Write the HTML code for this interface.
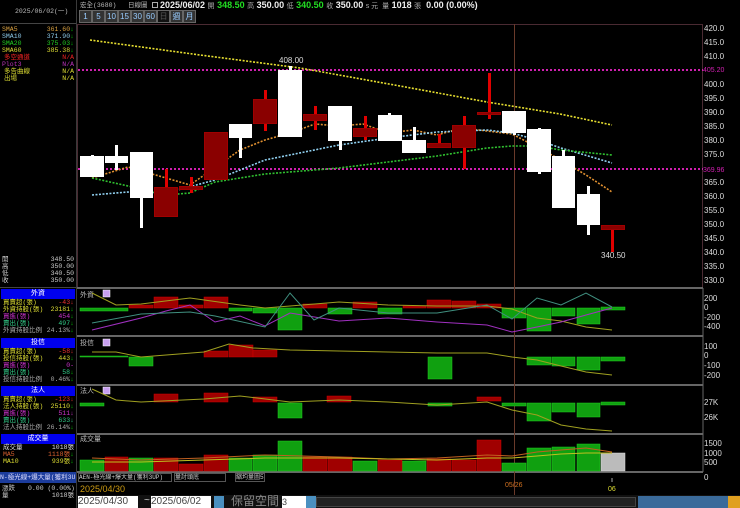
<!DOCTYPE html>
<html><head><meta charset="utf-8"><style>
*{margin:0;padding:0;box-sizing:border-box}
body{width:740px;height:508px;background:#000;overflow:hidden;position:relative;font-family:"Liberation Sans","Noto Sans CJK TC",sans-serif;font-size:8px;color:#ccc}
.a{position:absolute;white-space:nowrap;line-height:1}
.s{font-family:"Liberation Mono","Noto Sans CJK TC",monospace;font-size:6.5px}
.r{text-align:right}
.hdr{background:#0000ee;color:#fff;text-align:center;height:10px;line-height:10px;font-size:7px}
.btn{position:absolute;top:10px;height:13px;background:#333;border:1px solid #666;color:#9cf;font-size:8px;text-align:center;line-height:11px}
</style></head><body>
<div class="a s" style="left:15px;top:9px;color:#bbb">2025/06/02(一)</div>
<div class="a" style="left:0;top:23px;width:76px;height:1px;background:#444"></div>
<div class="a" style="left:76px;top:0;width:1px;height:508px;background:#3a3a3a"></div>
<div class="a s" style="left:2px;top:27px;color:#d9a040">SMA5</div><div class="a s r" style="left:40px;top:27px;width:34px;color:#d9a040">361.60<span style="color:#0c0">↓</span></div>
<div class="a s" style="left:2px;top:34px;color:#8cc8e8">SMA10</div><div class="a s r" style="left:40px;top:34px;width:34px;color:#8cc8e8">371.90<span style="color:#0c0">↓</span></div>
<div class="a s" style="left:2px;top:41px;color:#2c2">SMA20</div><div class="a s r" style="left:40px;top:41px;width:34px;color:#2c2">375.03<span style="color:#0c0">↓</span></div>
<div class="a s" style="left:2px;top:48px;color:#dd3">SMA60</div><div class="a s r" style="left:40px;top:48px;width:34px;color:#dd3">385.38<span style="color:#0c0">↓</span></div>
<div class="a s" style="left:4px;top:55px;color:#e22">多空通道</div><div class="a s r" style="left:40px;top:55px;width:34px;color:#e22">N/A</div>
<div class="a s" style="left:2px;top:62px;color:#b3b">Plot3</div><div class="a s r" style="left:40px;top:62px;width:34px;color:#b3b">N/A</div>
<div class="a s" style="left:4px;top:69px;color:#dd3">多告曲線</div><div class="a s r" style="left:40px;top:69px;width:34px;color:#dd3">N/A</div>
<div class="a s" style="left:4px;top:76px;color:#dd3">出場</div><div class="a s r" style="left:40px;top:76px;width:34px;color:#dd3">N/A</div>
<div class="a s" style="left:2px;top:257px">開</div><div class="a s r" style="left:40px;top:257px;width:34px">348.50</div>
<div class="a s" style="left:2px;top:264px">高</div><div class="a s r" style="left:40px;top:264px;width:34px">350.00</div>
<div class="a s" style="left:2px;top:271px">低</div><div class="a s r" style="left:40px;top:271px;width:34px">340.50</div>
<div class="a s" style="left:2px;top:278px">收</div><div class="a s r" style="left:40px;top:278px;width:34px">350.00</div>
<div class="a" style="left:0;top:287px;width:76px;height:1px;background:#444"></div>
<div class="a hdr" style="left:1px;top:289px;width:74px">外資</div>
<div class="a s" style="left:3px;top:300px;color:#dd3">買賣超(張)</div><div class="a s r" style="left:40px;top:300px;width:34px;color:#e33">-43↓</div>
<div class="a s" style="left:3px;top:307px;color:#dd3">外資持股(張)</div><div class="a s r" style="left:44px;top:307px;width:30px;color:#dd3">23181<span style="color:#0c0">↓</span></div>
<div class="a s" style="left:3px;top:314px;color:#c3c">買進(張)</div><div class="a s r" style="left:40px;top:314px;width:34px;color:#c3c">454<span style="color:#0c0">↓</span></div>
<div class="a s" style="left:3px;top:321px;color:#3c8">賣出(張)</div><div class="a s r" style="left:40px;top:321px;width:34px;color:#3c8">497<span style="color:#0c0">↓</span></div>
<div class="a s" style="left:3px;top:328px;color:#aaa">外資持股比例</div><div class="a s r" style="left:44px;top:328px;width:30px;color:#aaa">24.13%<span style="color:#0c0">↓</span></div>
<div class="a hdr" style="left:1px;top:338px;width:74px">投信</div>
<div class="a s" style="left:3px;top:349px;color:#dd3">買賣超(張)</div><div class="a s r" style="left:40px;top:349px;width:34px;color:#e33">-58↓</div>
<div class="a s" style="left:3px;top:356px;color:#dd3">投信持股(張)</div><div class="a s r" style="left:44px;top:356px;width:30px;color:#dd3">443<span style="color:#0c0">↓</span></div>
<div class="a s" style="left:3px;top:363px;color:#c3c">買進(張)</div><div class="a s r" style="left:40px;top:363px;width:34px;color:#c3c">0-</div>
<div class="a s" style="left:3px;top:370px;color:#3c8">賣出(張)</div><div class="a s r" style="left:40px;top:370px;width:34px;color:#3c8">58<span style="color:#0c0">↓</span></div>
<div class="a s" style="left:3px;top:377px;color:#aaa">投信持股比例</div><div class="a s r" style="left:44px;top:377px;width:30px;color:#aaa">0.46%<span style="color:#0c0">↓</span></div>
<div class="a hdr" style="left:1px;top:386px;width:74px">法人</div>
<div class="a s" style="left:3px;top:397px;color:#dd3">買賣超(張)</div><div class="a s r" style="left:40px;top:397px;width:34px;color:#e33">-123↓</div>
<div class="a s" style="left:3px;top:404px;color:#dd3">法人持股(張)</div><div class="a s r" style="left:44px;top:404px;width:30px;color:#dd3">25110<span style="color:#0c0">↓</span></div>
<div class="a s" style="left:3px;top:411px;color:#c3c">買進(張)</div><div class="a s r" style="left:40px;top:411px;width:34px;color:#c3c">511↓</div>
<div class="a s" style="left:3px;top:418px;color:#3c8">賣出(張)</div><div class="a s r" style="left:40px;top:418px;width:34px;color:#3c8">633↓</div>
<div class="a s" style="left:3px;top:425px;color:#aaa">法人持股比例</div><div class="a s r" style="left:44px;top:425px;width:30px;color:#aaa">26.14%<span style="color:#0c0">↓</span></div>
<div class="a hdr" style="left:1px;top:434px;width:74px">成交量</div>
<div class="a s" style="left:3px;top:445px;color:#ddd">成交量</div><div class="a s r" style="left:40px;top:445px;width:34px;color:#ddd">1018張</div>
<div class="a s" style="left:3px;top:452px;color:#d86030">MA5</div><div class="a s r" style="left:40px;top:452px;width:34px;color:#d86030">1118張<span style="color:#0c0">↓</span></div>
<div class="a s" style="left:3px;top:459px;color:#dd3">MA10</div><div class="a s r" style="left:40px;top:459px;width:34px;color:#dd3">939張<span style="color:#0c0">↓</span></div>
<div class="a s" style="left:0;top:472px;width:76px;height:11px;background:#1c3c9c;color:#ddf;line-height:11px;overflow:hidden">N-極光線+爆大量(獲利3U</div>
<div class="a s" style="left:2px;top:486px">漲跌</div><div class="a s r" style="left:28px;top:486px;width:46px">0.00 (0.00%)</div>
<div class="a s" style="left:2px;top:493px">量</div><div class="a s r" style="left:28px;top:493px;width:46px">1018張</div>

<div class="a s" style="left:80px;top:3px;color:#bbb">宏全(3680)</div>
<div class="a s" style="left:128px;top:3px;color:#bbb">日線圖</div>
<div class="a" style="left:152px;top:2px;width:6px;height:6px;border:1px solid #aaa"></div>
<div class="a" style="left:160px;top:1px;font-size:9px;font-weight:bold;color:#eee">2025/06/02 <span style="font-weight:normal;font-size:7px;color:#aaa">開</span> <span style="color:#2d2">348.50</span> <span style="font-weight:normal;font-size:7px;color:#aaa">高</span> 350.00 <span style="font-weight:normal;font-size:7px;color:#aaa">低</span> <span style="color:#2d2">340.50</span> <span style="font-weight:normal;font-size:7px;color:#aaa">收</span> 350.00 <span style="font-weight:normal;font-size:7px;color:#aaa">s 元 &nbsp;量</span> 1018 <span style="font-weight:normal;font-size:7px;color:#aaa">張</span> &nbsp;0.00 (0.00%)</div>
<div class="btn" style="left:79px;width:13px">1</div><div class="btn" style="left:92px;width:13px">5</div><div class="btn" style="left:105px;width:13px">10</div><div class="btn" style="left:118px;width:13px">15</div><div class="btn" style="left:131px;width:13px">30</div><div class="btn" style="left:144px;width:13px">60</div><div class="btn" style="left:157px;width:13px;background:#111;color:#555">日</div><div class="btn" style="left:170px;width:13px">週</div><div class="btn" style="left:183px;width:13px">月</div>

<svg class="a" style="left:0;top:0" width="740" height="508" viewBox="0 0 740 508" font-family="Liberation Sans, sans-serif" font-size="8">
<rect x="77.5" y="24.5" width="625" height="263" fill="none" stroke="#4a2a32"/>
<g stroke="#666" stroke-width="2"><line x1="77" y1="288" x2="703" y2="288"/><line x1="77" y1="336" x2="703" y2="336"/><line x1="77" y1="385" x2="703" y2="385"/><line x1="77" y1="434" x2="703" y2="434"/><line x1="77" y1="472" x2="703" y2="472"/></g>
<line x1="703" y1="288" x2="703" y2="472" stroke="#666"/>
<line x1="514.5" y1="24" x2="514.5" y2="495" stroke="#6a3a2a"/>
<g stroke="#d020b0" stroke-width="2" stroke-dasharray="2 2"><line x1="78" y1="70" x2="703" y2="70"/><line x1="78" y1="169" x2="703" y2="169"/></g>
<g fill="none" stroke-width="1.6" stroke-dasharray="2 1.5">
<polyline stroke="#e8e030" points="90,40 200,55 300,68 400,86 487,102 560,114 612,125"/>
<polyline stroke="#e09030" points="92,178 128,167 166,178 190,185 240,150 265,140 290,133 315,124 339,126 363,124 388,133 413,130 437,135 462,128 487,131 512,134 537,147 561,160 586,175 612,192"/>
<polyline stroke="#90d0f0" points="92,195 128,192 166,193 215,180 265,160 339,145 388,138 437,132 487,130 512,133 537,140 561,148 612,163"/>
<polyline stroke="#30c030" points="92,178 128,186 166,195 190,193 215,182 265,174 339,168 388,162 437,156 487,148 512,146 537,146 561,150 612,155"/>
</g>
<g fill="#fff">
<rect x="91" y="155" width="3" height="22"/><rect x="80" y="156" width="24" height="21"/>
<rect x="115" y="145" width="3" height="25"/><rect x="105" y="156" width="23" height="7"/>
<rect x="140" y="152" width="3" height="76"/><rect x="130" y="152" width="23" height="46"/>
<rect x="239" y="124" width="3" height="34"/><rect x="229" y="124" width="23" height="14"/>
<rect x="289" y="66" width="3" height="71"/><rect x="278" y="70" width="24" height="67"/>
<rect x="339" y="106" width="3" height="44"/><rect x="328" y="106" width="24" height="35"/>
<rect x="388" y="113" width="3" height="28"/><rect x="378" y="115" width="24" height="26"/>
<rect x="413" y="127" width="3" height="26"/><rect x="402" y="140" width="24" height="13"/>
<rect x="513" y="111" width="3" height="24"/><rect x="502" y="111" width="24" height="22"/>
<rect x="538" y="128" width="3" height="46"/><rect x="527" y="129" width="24" height="43"/>
<rect x="562" y="150" width="3" height="58"/><rect x="552" y="156" width="23" height="52"/>
<rect x="587" y="186" width="3" height="49"/><rect x="577" y="194" width="23" height="31"/>
</g>
<g fill="#e00000">
<rect x="165" y="169" width="3" height="21"/><rect x="190" y="177" width="3" height="16"/><rect x="264" y="90" width="3" height="41"/><rect x="314" y="106" width="3" height="24"/><rect x="364" y="116" width="3" height="24"/><rect x="438" y="134" width="3" height="14"/><rect x="463" y="116" width="3" height="53"/><rect x="488" y="73" width="3" height="46"/><rect x="611" y="229" width="3" height="23"/>
</g>
<g fill="#8a0000" stroke="#a00000">
<rect x="154.5" y="187.5" width="23" height="29"/><rect x="179.5" y="186.5" width="23" height="3"/><rect x="204.5" y="132.5" width="23" height="47"/><rect x="253.5" y="99.5" width="23" height="24"/><rect x="303.5" y="114.5" width="23" height="6"/><rect x="353.5" y="128.5" width="23" height="8"/><rect x="427.5" y="143.5" width="23" height="4"/><rect x="452.5" y="125.5" width="23" height="22"/><rect x="477.5" y="112.5" width="23" height="2"/><rect x="601.5" y="225.5" width="23" height="4"/>
</g>
<text x="279" y="63" fill="#ddd">408.00</text>
<text x="601" y="258" fill="#ddd">340.50</text>
<g fill="#ddd" font-size="8">
<text x="704" y="31">420.0</text><text x="704" y="45">415.0</text><text x="704" y="59">410.0</text><text x="704" y="87">400.0</text><text x="704" y="101">395.0</text><text x="704" y="115">390.0</text><text x="704" y="129">385.0</text><text x="704" y="143">380.0</text><text x="704" y="157">375.0</text><text x="704" y="185">365.0</text><text x="704" y="199">360.0</text><text x="704" y="213">355.0</text><text x="704" y="227">350.0</text><text x="704" y="241">345.0</text><text x="704" y="255">340.0</text><text x="704" y="269">335.0</text><text x="704" y="283">330.0</text>
<text x="704" y="301">200</text><text x="704" y="310">0</text><text x="704" y="320">-200</text><text x="704" y="329">-400</text>
<text x="704" y="349">100</text><text x="704" y="358">0</text><text x="704" y="368">-100</text><text x="704" y="378">-200</text>
<text x="704" y="405">27K</text><text x="704" y="420">26K</text>
<text x="704" y="446">1500</text><text x="704" y="456">1000</text><text x="704" y="465">500</text><text x="704" y="480">0</text>
</g>
<text x="703" y="72" fill="#d020b0" font-size="7">405.20</text><text x="703" y="172" fill="#d020b0" font-size="7">369.96</text>
<g fill="#bbb" font-size="7"><text x="80" y="297">外資</text><text x="80" y="345">投信</text><text x="80" y="393">法人</text><text x="80" y="441">成交量</text></g>
<g fill="#c8a0f0" stroke="#fff" stroke-width=".5"><rect x="103" y="290" width="7" height="7"/><rect x="103" y="339" width="7" height="7"/><rect x="103" y="387" width="7" height="7"/></g>
<g fill="#10a010" stroke="#20d020" stroke-width=".5">
<rect x="80" y="308" width="48" height="3"/><rect x="229" y="308" width="23" height="3"/><rect x="253" y="308" width="24" height="5"/><rect x="278" y="308" width="24" height="22"/><rect x="328" y="308" width="24" height="6"/><rect x="378" y="308" width="24" height="6"/><rect x="502" y="308" width="24" height="10"/><rect x="527" y="308" width="24" height="23"/><rect x="552" y="308" width="23" height="8"/><rect x="577" y="308" width="23" height="16"/><rect x="601" y="307" width="24" height="3"/>
</g>
<g fill="#a00000" stroke="#d00000" stroke-width=".5">
<rect x="129" y="305" width="24" height="3"/><rect x="154" y="297" width="24" height="11"/><rect x="179" y="305" width="24" height="3"/><rect x="204" y="297" width="24" height="11"/><rect x="303" y="304" width="24" height="4"/><rect x="353" y="302" width="24" height="6"/><rect x="427" y="300" width="24" height="8"/><rect x="452" y="301" width="24" height="7"/><rect x="477" y="304" width="24" height="4"/><rect x="403" y="306" width="23" height="2"/>
</g>
<g fill="none" stroke-width="1">
<polyline stroke="#a0a020" points="92,293 116,305 141,304 190,298 240,305 265,308 290,306 339,302 388,305 437,306 487,306 512,309 537,318 561,321 586,327 612,330"/>
<polyline stroke="#a030c0" points="92,330 141,318 166,311 190,305 215,322 240,316 265,326 290,313 339,321 388,318 437,322 487,325 512,332 537,327 561,322 586,315 612,308"/>
<polyline stroke="#409080" points="92,323 141,314 190,312 215,316 265,327 290,293 314,320 339,308 388,313 437,313 487,305 512,319 537,298 561,305 586,293 612,307"/>
</g>
<g fill="#10a010" stroke="#20d020" stroke-width=".5">
<rect x="129" y="357" width="24" height="9"/><rect x="428" y="357" width="24" height="22"/><rect x="527" y="357" width="24" height="8"/><rect x="552" y="357" width="23" height="9"/><rect x="577" y="357" width="23" height="13"/><rect x="601" y="357" width="24" height="4"/><rect x="80" y="356" width="48" height="1"/>
</g>
<g fill="#a00000" stroke="#d00000" stroke-width=".5">
<rect x="204" y="351" width="24" height="6"/><rect x="229" y="345" width="24" height="12"/><rect x="253" y="350" width="24" height="7"/>
</g>
<polyline fill="none" stroke="#a0a020" points="92,352 116,352 141,357 204,352 229,344 253,348 290,350 388,352 437,353 487,353 512,357 537,360 561,366 586,372 612,375"/>
<g fill="#10a010" stroke="#20d020" stroke-width=".5">
<rect x="80" y="403" width="24" height="3"/><rect x="278" y="403" width="24" height="15"/><rect x="502" y="403" width="24" height="3"/><rect x="527" y="403" width="24" height="18"/><rect x="552" y="403" width="23" height="9"/><rect x="577" y="403" width="23" height="14"/><rect x="601" y="402" width="24" height="3"/><rect x="428" y="403" width="24" height="3"/>
</g>
<g fill="#a00000" stroke="#d00000" stroke-width=".5">
<rect x="154" y="394" width="24" height="8"/><rect x="204" y="393" width="24" height="9"/><rect x="253" y="397" width="24" height="5"/><rect x="327" y="396" width="24" height="6"/><rect x="477" y="397" width="24" height="4"/>
</g>
<polyline fill="none" stroke="#a0a020" points="92,389 116,400 141,402 204,399 240,396 290,402 339,400 388,402 437,405 487,402 512,410 537,415 561,425 586,429 612,431"/>
<g stroke-width=".5">
<g fill="#10a010" stroke="#20d020"><rect x="80" y="460" width="24" height="11"/><rect x="129" y="458" width="24" height="13"/><rect x="229" y="458" width="23" height="13"/><rect x="253" y="455" width="24" height="16"/><rect x="278" y="441" width="24" height="30"/><rect x="353" y="461" width="24" height="10"/><rect x="402" y="461" width="24" height="10"/><rect x="502" y="463" width="24" height="8"/><rect x="527" y="448" width="24" height="23"/><rect x="552" y="447" width="23" height="24"/><rect x="577" y="444" width="23" height="27"/></g>
<g fill="#a00000" stroke="#d00000"><rect x="105" y="457" width="23" height="14"/><rect x="154" y="458" width="24" height="13"/><rect x="179" y="464" width="24" height="7"/><rect x="204" y="455" width="24" height="16"/><rect x="303" y="457" width="24" height="14"/><rect x="328" y="457" width="24" height="14"/><rect x="378" y="460" width="24" height="11"/><rect x="427" y="459" width="24" height="12"/><rect x="452" y="460" width="24" height="11"/><rect x="477" y="440" width="24" height="31"/></g>
<rect x="601" y="453" width="24" height="18" fill="#bbb" stroke="#ddd"/>
</g>
<polyline fill="none" stroke="#c06020" points="92,458 141,460 204,458 265,455 339,457 388,459 437,458 487,455 512,456 537,452 561,450 586,448 612,452"/>
<polyline fill="none" stroke="#c0c020" points="92,462 141,462 204,460 265,458 339,458 388,459 437,460 487,458 512,458 537,456 561,454 586,453 612,453"/>
<text x="505" y="487" fill="#d07020" font-size="7">05/26</text>
<line x1="612" y1="478" x2="612" y2="482" stroke="#aaa"/><text x="608" y="491" fill="#dd3" font-size="7">06</text>
<text x="80" y="492" fill="#cc9a10" font-size="9">2025/04/30</text>
</svg>
<div class="a s" style="left:78px;top:473px;width:94px;height:9px;border:1px solid #555;color:#ccc;line-height:8px;font-size:6px;overflow:hidden">AEN-極光線+爆大量(獲利3UP)</div>
<div class="a s" style="left:174px;top:473px;width:52px;height:9px;border:1px solid #555;color:#ccc;line-height:8px;font-size:6px">量討頭底</div>
<div class="a s" style="left:235px;top:473px;width:30px;height:9px;border:1px solid #555;color:#ccc;line-height:8px;font-size:6px">縮均量圖5</div>
<div class="a" style="left:77px;top:495px;width:663px;height:13px;background:#111"></div>
<div class="a" style="left:78px;top:496px;width:60px;height:12px;background:#fff;color:#444;font-size:10px;line-height:12px">2025/04/30</div>
<div class="a" style="left:144px;top:496px;color:#ccc;font-size:10px">~</div>
<div class="a" style="left:151px;top:496px;width:60px;height:12px;background:#fff;color:#444;font-size:10px;line-height:12px">2025/06/02</div>
<div class="a" style="left:214px;top:496px;width:10px;height:12px;background:#4a90c0"></div>
<div class="a" style="left:231px;top:495px;color:#888;font-size:12px">保留空間</div>
<div class="a" style="left:282px;top:496px;width:24px;height:12px;background:#fff;color:#444;font-size:9px;line-height:12px">3</div>
<div class="a" style="left:306px;top:496px;width:10px;height:12px;background:#4a90c0"></div>
<div class="a" style="left:316px;top:497px;width:320px;height:10px;background:#222;border:1px solid #444"></div>
<div class="a" style="left:638px;top:496px;width:102px;height:12px;background:#3a6a9a"></div>
<div class="a" style="left:728px;top:496px;width:12px;height:12px;background:#e0a020"></div>
</body></html>
